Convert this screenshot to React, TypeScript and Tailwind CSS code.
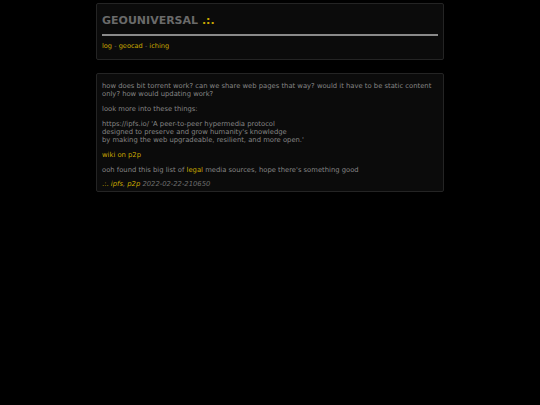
export default function App() {
  const link = "text-[#c9a800]";
  return (
    <div className="min-h-[405px] bg-black pt-[3px] font-['DejaVu_Sans',sans-serif]">
      <div className="mx-auto w-[348px]">
        <div className="rounded-[2px] border border-[#242424] bg-[#0b0b0b] px-[5px] pt-[10px] pb-[9px]">
          <h1 className="text-[11px] font-bold leading-[14px] text-[#6a6a6a]">
            GEOUNIVERSAL <span className="text-[#c9a800]">.:.</span>
          </h1>
          <div className="mt-[6px] h-[2px] bg-[#8a8a8a]" />
          <div className="mt-[6px] text-[6.6px] leading-[8px] text-[#c9a800]">
            log <span className="text-[#6a6a6a]">-</span> geocad <span className="text-[#6a6a6a]">-</span> iching
          </div>
        </div>

        <div className="mt-[13px] rounded-[2px] border border-[#242424] bg-[#0b0b0b] px-[5px] pt-[8px] pb-[3px] text-[6.8px] leading-[8px] text-[#858585]">
          <p>
            how does bit torrent work? can we share web pages that way? would it have to be static content only? how would updating work?
          </p>
          <p className="mt-[7px]">look more into these things:</p>
          <p className="mt-[7px]">
            https://ipfs.io/ 'A peer-to-peer hypermedia protocol
            <br />
            designed to preserve and grow humanity's knowledge
            <br />
            by making the web upgradeable, resilient, and more open.'
          </p>
          <p className={`mt-[7px] ${link}`}>wiki on p2p</p>
          <p className="mt-[7px]">
            ooh found this big list of <span className={link}>legal</span> media sources, hope there's something good
          </p>
          <p className="mt-[6px] italic">
            <span className={`not-italic ${link}`}>.:.</span> <span className={link}>ipfs</span>,{" "}
            <span className={link}>p2p</span> <span className="text-[#6e6e6e]">2022-02-22-210650</span>
          </p>
        </div>
      </div>
    </div>
  );
}
